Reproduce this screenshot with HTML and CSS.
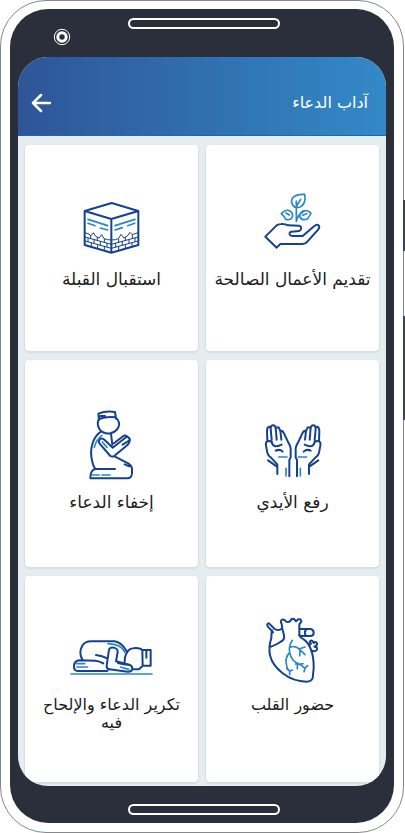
FILE: index.html
```html
<!DOCTYPE html>
<html lang="ar" dir="rtl">
<head>
<meta charset="utf-8">
<meta name="viewport" content="width=device-width, initial-scale=1">
<title>آداب الدعاء</title>
<link rel="stylesheet" href="styles.css">
</head>
<body>
<div class="phone">
  <span class="side-key side-key-power"></span>
  <span class="side-key side-key-volume"></span>
  <div class="bezel">
    <div class="bezel-top">
      <span class="slot"></span>
      <svg class="camera" viewBox="0 0 18 18" aria-hidden="true"><circle cx="9" cy="9" r="7.7"/><circle class="lens" cx="9" cy="9" r="4.2"/></svg>
    </div>
    <div class="screen">
      <header class="app-bar">
        <h1 class="title">آداب الدعاء</h1>
        <button class="back" type="button" aria-label="رجوع">
          <svg viewBox="0 0 20 20" width="20" height="20"><path d="M19 10H2M10 2L2 10L10 18"/></svg>
        </button>
      </header>
      <main class="grid">
        <a class="card card-upper" href="#deeds">
          <svg class="icon" viewBox="0 0 300 210" aria-hidden="true"><g transform="translate(36 -9)">
            <path d="M31 155L65 121Q71 117 78 117Q90 116 99 121L132 122Q141 124 138 133Q135 139 126 139L109 140Q102 142 104 148Q106 153 114 153L143 153L178 123Q187 117 191 121Q195 125 190 133L157 170Q152 177 143 177L76 177L65 188Z"/>
            <g class="light"><path d="M124 109V48M124 109Q128 92 139 84L149 78M119 66Q105 55 112 40Q121 27 149 28Q154 51 139 64Q130 70 119 66M79 86Q93 70 107 79Q116 88 111 98Q104 108 91 102Q88 94 79 86M93 84L103 90M168 85Q157 72 142 79Q132 86 135 96Q142 109 158 101L168 85M143 91L155 86M124 65L137 43"/></g>
          </g></svg>
          <span class="label">تقديم الأعمال الصالحة</span>
        </a>
        <a class="card card-upper" href="#qibla">
          <svg class="icon" viewBox="0 0 300 210" aria-hidden="true"><g transform="translate(24 6)">
            <path d="M44 63L125 39L205 63V165L124 188L44 165ZM44 63L124 87L205 63M124 87V188"/>
            <g class="light"><path d="M54 88L113 107M54 100L75 107M91 114L113 120M195 88L135 107M194 100L173 107M157 113L135 120"/></g>
            <g class="fine"><path d="M45 128L54 131L63 137L70 128L77 139L87 144L95 134L102 146L113 149L124 150L137 149L146 145L153 133L162 144L172 138L180 127L187 134L204 128M45 141L124 163L204 141M45 153L124 175L204 153M62 137V146M82 142V151M103 147V157M54 145V155M72 150V160M91 155V165M111 160V171M64 159V169M83 164V174M103 169V180M187 135V145M166 142V151M146 148V157M195 144V155M177 149V160M157 155V165M137 160V171M186 159V168M166 164V174M146 169V180"/></g>
          </g></svg>
          <span class="label">استقبال القبلة</span>
        </a>
        <a class="card card-middle" href="#hands">
          <svg class="icon" viewBox="0 0 300 210" aria-hidden="true"><g transform="translate(36 9)">
            <g>
              <path d="M37 81L36 52Q36 40 42 38Q47 38 47 45L50 77M47 47Q47 34 54 34Q61 34 62 42L65 77M62 47Q65 38 71 40L76 51L79 77M77 51Q83 49 87 58L100 86Q106 94 107 104V130L103 138V187M62 110Q74 104 83 113M37 82Q31 84 33 95L37 116Q39 125 48 131L67 151V180M50 82Q51 93 59 96Q68 98 80 92M37 82Q49 79 52 89M39 139L65 157"/>
              <path class="light" d="M71 129H96M93 163V186"/>
            </g>
            <g transform="translate(229 0) scale(-1 1)">
              <path d="M37 81L36 52Q36 40 42 38Q47 38 47 45L50 77M47 47Q47 34 54 34Q61 34 62 42L65 77M62 47Q65 38 71 40L76 51L79 77M77 51Q83 49 87 58L100 86Q106 94 107 104V130L103 138V187M62 110Q74 104 83 113M37 82Q31 84 33 95L37 116Q39 125 48 131L67 151V180M50 82Q51 93 59 96Q68 98 80 92M37 82Q49 79 52 89M39 139L65 157"/>
              <path class="light" d="M74 129H99M93 163V186"/>
            </g>
          </g></svg>
          <span class="label">رفع الأيدي</span>
        </a>
        <a class="card card-middle" href="#secret">
          <svg class="icon" viewBox="0 0 300 210" aria-hidden="true"><g transform="translate(24 -36)">
            <path d="M87 63L85 44Q107 35 135 39L138 59M87 60Q111 51 137 55M88 57Q78 75 89 91Q101 106 121 103Q140 98 146 83Q151 69 138 56M91 51H105M94 97Q76 108 68 132Q59 161 67 188Q69 202 76 210M76 210H135M76 210Q61 213 61 238H169Q187 239 186 220V208Q184 199 176 194L135 173M123 104L127 137M104 123L128 146L169 114Q180 113 179 124Q179 133 169 141L136 168Q130 176 121 171L89 134Q83 126 90 120Q97 116 104 123M132 133L159 112Q164 107 171 112L180 121M158 137L180 123M164 196L178 202"/>
            <g class="light"><path d="M96 109Q78 122 73 145M97 129L111 145M66 228H88M96 228H120"/></g>
          </g></svg>
          <span class="label">إخفاء الدعاء</span>
        </a>
        <a class="card card-lower" href="#heart">
          <svg class="icon" viewBox="0 0 300 210" aria-hidden="true"><g transform="translate(36 -27)">
            <path d="M50 77L38 64Q34 56 42 55L59 72Q66 77 77 73L82 70L80 57Q74 48 82 44Q89 42 93 50Q101 53 106 48Q108 40 117 42L123 49L130 43Q139 41 139 50L133 58V91Q136 99 146 103Q161 113 168 134Q177 158 176 190L173 219Q169 230 155 230Q115 230 83 205Q52 181 45 151Q40 128 49 99ZM51 76L54 82M48 125Q65 119 76 111Q90 105 87 91L83 75"/>
            <path d="M134 72H166Q176 73 176 83Q176 93 166 93H139L133 91M153 74Q146 83 153 92M163 121L168 116Q160 110 168 107Q173 106 176 114Q181 108 186 115Q188 121 178 125Q188 125 186 134Q182 142 168 136"/>
            <g class="light"><path d="M112 106Q100 124 104 143Q109 170 135 178L150 190L147 200M150 189L158 182M104 142Q90 157 94 177Q96 193 104 197V209M104 199L112 195M95 190L102 197M105 127Q121 119 137 136L150 149M132 132L150 126M135 135L134 152M135 178L122 177M127 178V191M135 178L144 176"/></g>
          </g></svg>
          <span class="label">حضور القلب</span>
        </a>
        <a class="card card-lower" href="#repeat">
          <svg class="icon" viewBox="0 0 300 210" aria-hidden="true"><g transform="translate(-6 48)">
            <path d="M68 91Q55 69 66 49Q73 34 94 34H164Q184 37 199 62M108 75Q127 77 142 85M142 123H53Q42 122 42 110Q42 92 59 91L106 92Q119 93 130 100M148 119Q139 116 140 107L147 59Q150 51 162 53Q174 57 173 66L168 94L208 104Q218 108 217 118Q214 126 203 125L148 118M174 99Q190 104 209 105M194 96Q193 72 209 58Q225 50 243 57L247 61M218 118L237 118L247 109M247 60H272V107H248ZM259 63V83"/>
            <g class="light"><path d="M144 41Q184 42 195 67M50 101H74M50 111H83M33 132H276M182 111L207 119"/></g>
          </g></svg>
          <span class="label">تكرير الدعاء والإلحاح فيه</span>
        </a>
      </main>
    </div>
    <div class="bezel-bottom"><span class="slot"></span></div>
  </div>
</div>
</body>
</html>
```
FILE: styles.css
```css
* { box-sizing: border-box; }

body {
  margin: 0;
  background: #fff;
  font-family: "DejaVu Sans", sans-serif;
  color: #1c1c1e;
}

.phone {
  position: relative;
  display: flex;
  min-height: 100vh;
  margin-right: 1px;
  padding: 8px 9px 9px;
  border: 1px solid #85878f;
  border-radius: 46px;
  background: #fff;
}

.side-key {
  position: absolute;
  right: -2px;
  width: 2px;
  background: #3d434e;
}
.side-key-power { top: 199px; height: 51px; }
.side-key-volume { top: 315px; height: 104px; }

.bezel {
  flex: 1;
  display: flex;
  flex-direction: column;
  min-width: 0;
  padding: 0 8px;
  border-radius: 38px;
  background: #2a2f3b;
}

.bezel-top,
.bezel-bottom {
  position: relative;
  display: flex;
  justify-content: center;
  padding-left: 3px;
}
.bezel-top { height: 48px; padding-top: 9px; }
.bezel-bottom { height: 37px; padding-top: 18px; }

.slot {
  width: 152px;
  height: 11px;
  border: 2px solid #fff;
  border-radius: 6px;
}

.camera {
  position: absolute;
  left: 35px;
  top: 19px;
  width: 18px;
  height: 18px;
  fill: none;
  stroke: #fff;
  stroke-width: 1;
}
.lens { stroke-width: 3; }

.screen {
  flex: 1;
  display: flex;
  flex-direction: column;
  overflow: hidden;
  border-radius: 30px;
  background: #e6edf0;
}

.app-bar {
  display: flex;
  align-items: center;
  justify-content: space-between;
  height: 79px;
  padding: 13px 18px 0 13px;
  border-bottom: 1px solid #1769b3;
  background: linear-gradient(90deg, #2e5598, #3389c7);
  color: #fff;
}

.title {
  margin: 0;
  font-size: 16px;
  line-height: 20px;
  font-weight: 400;
}

.back {
  display: flex;
  padding: 0;
  border: 0;
  background: none;
}
.back svg {
  fill: none;
  stroke: #fff;
  stroke-width: 2.5;
  stroke-linecap: round;
  stroke-linejoin: round;
}

.grid {
  flex: 1;
  display: grid;
  grid-template-columns: 1fr 1fr;
  grid-auto-rows: 1fr;
  gap: 9px 8px;
  padding: 9px 7px 4px;
}

.card {
  display: flex;
  flex-direction: column;
  align-items: center;
  gap: 12px;
  border-radius: 4px;
  background: #fff;
  box-shadow: 0 1px 1px 1px #d6dee3;
  color: inherit;
  font-size: 17px;
  text-decoration: none;
}
.card-upper { padding-top: 43px; }
.card-middle { padding-top: 51px; }
.card-lower { padding-top: 38px; font-size: 16px; }

.icon {
  width: 100px;
  height: 70px;
  overflow: visible;
  fill: none;
  stroke: #15418f;
  stroke-width: 6;
  stroke-linecap: round;
  stroke-linejoin: round;
}
.light { stroke: #2a86c8; stroke-width: 5; }
.fine { stroke-width: 3; }

.label {
  max-width: 160px;
  line-height: 18px;
  text-align: center;
}
```
